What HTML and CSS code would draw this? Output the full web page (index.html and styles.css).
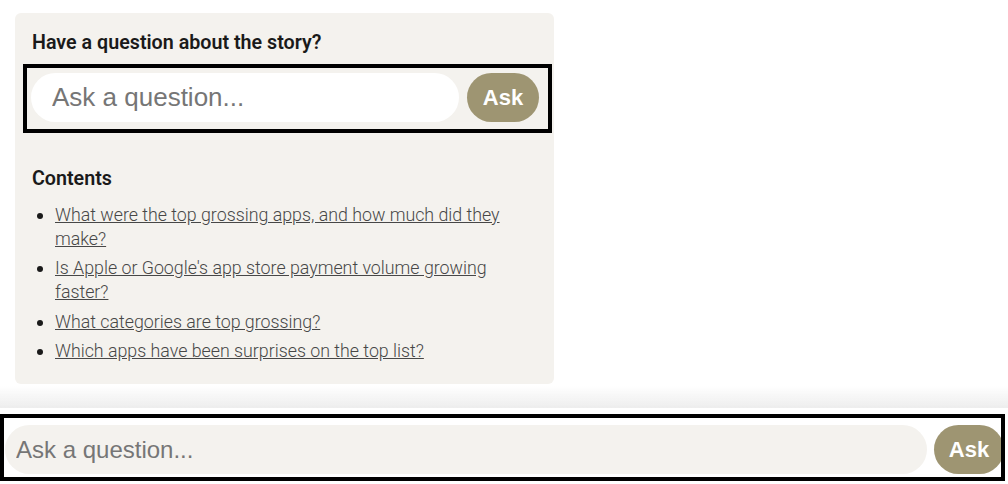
FILE: index.html
```html
<!DOCTYPE html>
<html lang="en">
<head>
<meta charset="utf-8">
<title>Story questions</title>
<link rel="stylesheet" href="styles.css">
</head>
<body>
  <aside class="card">
    <h2 class="card-title">Have a question about the story?</h2>
    <form class="ask-form">
      <input class="ask-input" type="text" placeholder="Ask a question...">
      <button class="ask-btn" type="button">Ask</button>
    </form>
    <h2 class="contents-title">Contents</h2>
    <ul class="contents">
      <li><a href="#">What were the top grossing apps, and how much did they make?</a></li>
      <li><a href="#">Is Apple or Google's app store payment volume growing faster?</a></li>
      <li><a href="#">What categories are top grossing?</a></li>
      <li><a href="#">Which apps have been surprises on the top list?</a></li>
    </ul>
  </aside>

  <div class="bottom-bar">
    <div class="fade"></div>
    <div class="bar-body">
      <form class="bar-form">
        <input class="bar-input" type="text" placeholder="Ask a question...">
        <button class="ask-btn bar-btn" type="button">Ask</button>
      </form>
    </div>
  </div>
</body>
</html>
```

FILE: styles.css
```css
* { box-sizing: border-box; }

body {
  margin: 0;
  background: #ffffff;
  font-family: Roboto, "Liberation Sans", sans-serif;
  color: #1a1a1a;
}

.card {
  margin: 13px 0 0 15px;
  width: 539px;
  height: 371px;
  padding: 18px 17px 0 17px;
  background: #f4f2ee;
  border-radius: 6px;
}

.card-title {
  margin: 0;
  font-size: 19.7px;
  line-height: 24px;
  font-weight: 600;
  color: #1a1a1a;
}

.ask-form {
  display: flex;
  gap: 8px;
  margin: 13px -11px 0 -5px;
  padding: 5px 9px 7px 4px;
  outline: 4px solid #000;
}

.ask-input {
  flex: 1;
  min-width: 0;
  height: 49px;
  border: none;
  border-radius: 25px;
  background: #ffffff;
  padding: 0 0 0 21px;
  font-family: "Liberation Sans", Arial, sans-serif;
  font-size: 26px;
  color: #333;
}

.ask-input::placeholder,
.bar-input::placeholder {
  color: #767676;
}

.ask-btn {
  width: 72px;
  height: 49px;
  border: none;
  border-radius: 25px;
  background: #9e9572;
  color: #ffffff;
  font-family: "Liberation Sans", Arial, sans-serif;
  font-size: 22px;
  font-weight: 700;
  padding: 0;
}

.contents-title {
  margin: 38px 0 0;
  font-size: 19.7px;
  line-height: 24px;
  font-weight: 600;
}

.contents {
  margin: 12px 0 0;
  padding-left: 23px;
  font-size: 17.8px;
  line-height: 24px;
}

.contents li {
  margin-bottom: 5.4px;
  color: #1a1a1a;
}

.contents a {
  color: #474747;
  font-weight: 300;
  text-decoration: underline;
}

.bottom-bar {
  position: fixed;
  left: 0;
  right: 0;
  bottom: 0;
}

.fade {
  height: 22px;
  background: linear-gradient(to bottom, rgba(238, 238, 238, 0), #ededed);
}

.bar-body {
  background: #ffffff;
  padding: 10px 7px 7px 4px;
}

.bar-form {
  display: flex;
  gap: 7px;
  padding: 7px 0 3px 1px;
  outline: 4px solid #000;
}

.bar-input {
  flex: 1;
  min-width: 0;
  height: 49px;
  border: none;
  border-radius: 25px;
  background: #f4f2ee;
  padding: 0 0 0 11px;
  font-family: "Liberation Sans", Arial, sans-serif;
  font-size: 24px;
  color: #333;
}

.bar-btn {
  width: 70px;
  margin-right: -3px;
}
```
